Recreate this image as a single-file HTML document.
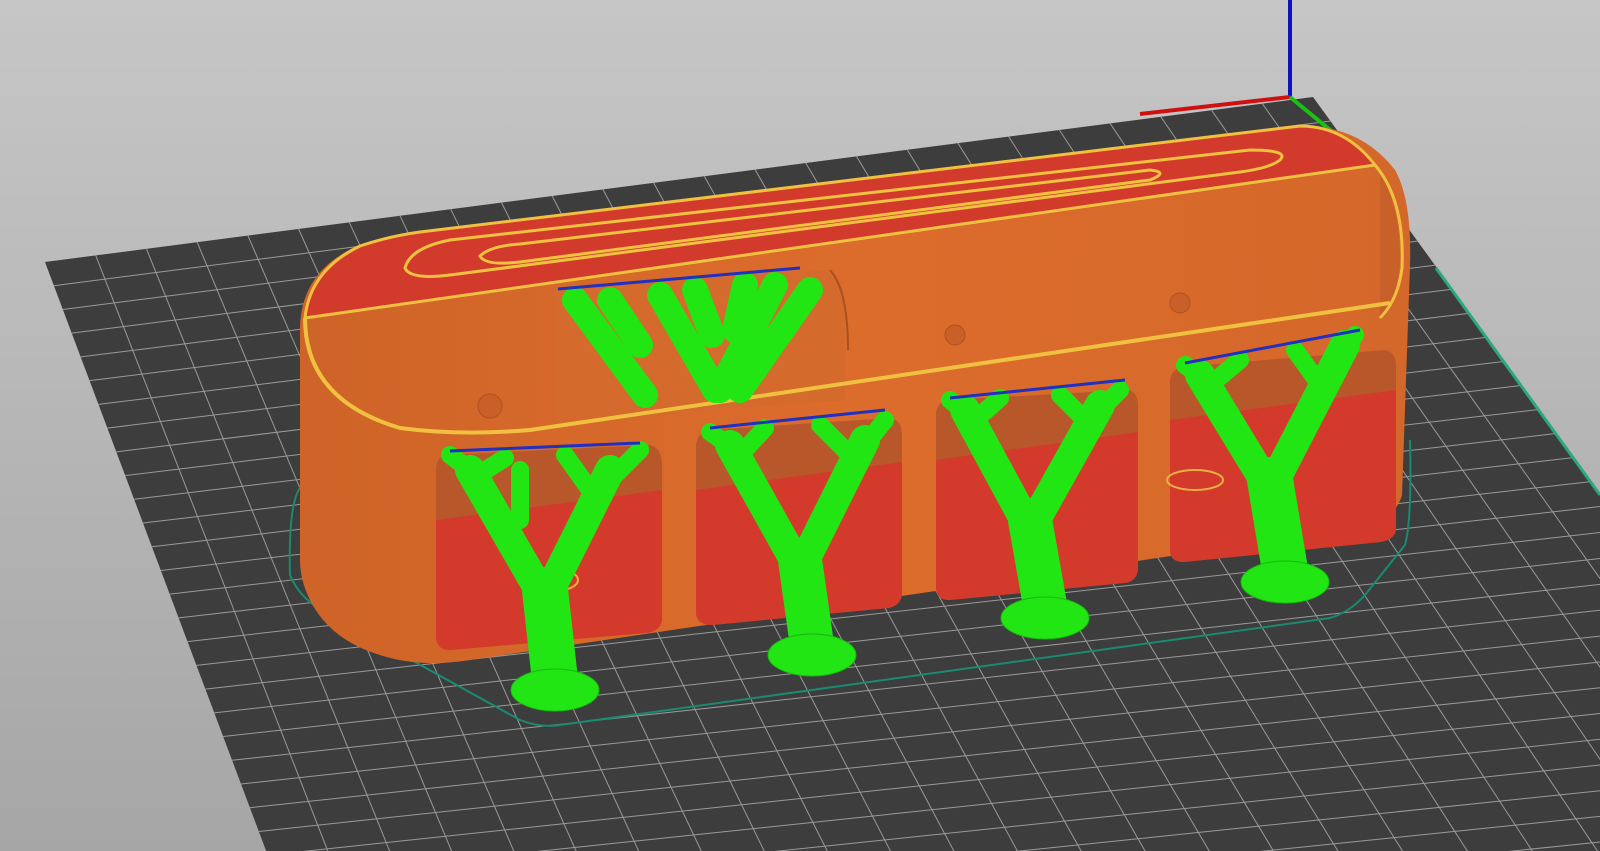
<!DOCTYPE html>
<html><head><meta charset="utf-8">
<style>
html,body{margin:0;padding:0;width:1600px;height:851px;overflow:hidden;background:#b4b4b4;}
svg{display:block;position:absolute;left:0;top:0;overflow:hidden}
</style></head>
<body>
<svg id="s" width="1600" height="851" viewBox="0 0 1600 851" xmlns="http://www.w3.org/2000/svg">
<defs>
<linearGradient id="bg" x1="0" y1="0" x2="0" y2="1">
<stop offset="0" stop-color="#c6c6c6"/><stop offset="1" stop-color="#a6a6a6"/>
</linearGradient>
<linearGradient id="wall" x1="0" y1="0" x2="1" y2="0">
<stop offset="0" stop-color="#cf6428"/><stop offset="0.5" stop-color="#dc6c2c"/><stop offset="1" stop-color="#d4682a"/>
</linearGradient>
<clipPath id="cl"><rect width="1600" height="851"/></clipPath>
</defs>
<g clip-path="url(#cl)">
<rect width="1600" height="851" fill="url(#bg)"/>
<polygon points="45,262 1313,97 1888,890 339,1045" fill="#3d3d3d"/>
<g id="grid" stroke="#9a9a9a" stroke-width="1"></g>
<!-- axes -->
<line x1="1290" y1="0" x2="1290" y2="97" stroke="#1010c0" stroke-width="4"/>
<line x1="1140" y1="114" x2="1290" y2="97" stroke="#d01010" stroke-width="4"/>
<line x1="1290" y1="97" x2="1352" y2="148" stroke="#18c018" stroke-width="4"/>
<line x1="1436" y1="268" x2="1600" y2="495" stroke="#2aa880" stroke-width="3"/>
<!-- brim outline -->
<path d="M302,485 Q288,500 290,575 Q300,600 330,615 L520,720 Q540,728 560,725 L1330,618 Q1350,612 1365,595 L1405,545 Q1412,520 1410,440" fill="none" stroke="#1a8a70" stroke-width="2"/>
<!-- box body -->
<path d="M300,330 Q300,270 360,245 Q390,235 420,232 L1300,126 Q1360,125 1395,170 Q1412,200 1410,265 L1402,495 Q1395,520 1360,528 L470,660 Q420,668 380,655 Q330,640 310,600 Q300,580 300,560 Z" fill="url(#wall)"/>
<!-- red top -->
<path d="M305,318 Q310,270 360,246 Q390,236 420,232 L1300,126 Q1345,126 1375,165 Z" fill="#d23b2c"/>
<path d="M305,318 Q310,270 360,246 Q390,236 420,232 L1300,126 Q1345,126 1375,165 L305,318" fill="none" stroke="#f0c040" stroke-width="3"/>
<path d="M405,268 Q410,248 450,240 L1250,150 Q1290,150 1280,160 Q1270,168 1240,172 L450,275 Q410,280 405,268 Z" fill="none" stroke="#f0c040" stroke-width="3"/>
<path d="M480,256 Q490,246 520,244 L1150,170 Q1170,172 1150,180 L520,262 Q485,266 480,256 Z" fill="none" stroke="#f0c040" stroke-width="3"/>
<!-- right cap interior -->
<path d="M1375,165 Q1400,200 1400,260 Q1398,300 1380,318 L1380,170 Z" fill="#c8602a"/>
<path d="M1375,165 Q1405,200 1402,268 Q1398,300 1380,318" fill="none" stroke="#f0c040" stroke-width="3"/>
<!-- back window -->
<path d="M555,290 L830,270 Q845,280 845,300 L845,400 L555,420 Z" fill="#d46a2c"/>
<path d="M830,270 Q848,290 848,350" fill="none" stroke="#a85020" stroke-width="2"/>
<!-- front rim -->
<path d="M305,318 Q305,400 400,428 Q460,436 530,430 L1390,303" fill="none" stroke="#f0c040" stroke-width="4"/>
<!-- holes -->
<circle cx="490" cy="406" r="12" fill="#c86028" stroke="#b05020"/>
<circle cx="955" cy="335" r="10" fill="#c86028" stroke="#b05020"/>
<circle cx="1180" cy="303" r="10" fill="#c86028" stroke="#b05020"/>
<!-- front windows -->
<g fill="#b8582a">
<path d="M445,455 L650,445 Q662,448 662,465 L662,620 Q660,632 645,633 L450,650 Q436,650 436,636 L436,470 Q436,458 445,455Z"/>
<path d="M708,430 L890,418 Q902,420 902,435 L902,595 Q900,606 888,608 L712,625 Q696,625 696,612 L696,445 Q698,432 708,430Z"/>
<path d="M948,400 L1128,390 Q1138,392 1138,405 L1138,570 Q1136,582 1124,583 L950,600 Q936,600 936,588 L936,412 Q938,402 948,400Z"/>
<path d="M1182,367 L1385,350 Q1396,352 1396,366 L1396,530 Q1394,540 1380,542 L1184,562 Q1170,562 1170,550 L1170,380 Q1172,369 1182,367Z"/>
</g>
<g fill="#d33a2c">
<path d="M436,520 L662,490 L662,620 Q660,632 645,633 L450,650 Q436,650 436,636Z"/>
<path d="M696,490 L902,462 L902,595 Q900,606 888,608 L712,625 Q696,625 696,612Z"/>
<path d="M936,460 L1138,432 L1138,570 Q1136,582 1124,583 L950,600 Q936,600 936,588Z"/>
<path d="M1170,420 L1396,390 L1396,530 Q1394,540 1380,542 L1184,562 Q1170,562 1170,550Z"/>
</g>
<ellipse cx="548" cy="580" rx="30" ry="12" fill="none" stroke="#e8b040" stroke-width="2"/>
<ellipse cx="1195" cy="480" rx="28" ry="10" fill="none" stroke="#e8b040" stroke-width="2"/>
<!-- trees -->
<g fill="none" stroke="#22e614" stroke-linecap="round" stroke-linejoin="round">
<!-- back -->
<g stroke-width="26">
<path d="M575,300 L645,395"/><path d="M610,300 L640,345"/>
<path d="M660,295 L715,390"/><path d="M695,290 L712,335"/>
<path d="M775,285 L720,390"/><path d="M810,290 L740,390"/><path d="M745,285 L735,330"/>
</g>
<!-- tree 1 -->
<path d="M555,680 L545,590" stroke-width="46"/>
<g stroke-width="30"><path d="M545,600 L470,470"/><path d="M545,600 L610,470"/></g>
<g stroke-width="18"><path d="M470,470 L450,455"/><path d="M470,480 L505,458"/><path d="M590,490 L565,455"/><path d="M610,480 L640,450"/><path d="M520,520 L520,470"/></g>
<!-- tree 2 -->
<path d="M812,645 L800,560" stroke-width="44"/>
<g stroke-width="30"><path d="M800,570 L730,445"/><path d="M800,570 L865,440"/></g>
<g stroke-width="18"><path d="M735,450 L710,432"/><path d="M740,455 L765,428"/><path d="M850,455 L820,425"/><path d="M865,445 L885,420"/></g>
<!-- tree 3 -->
<path d="M1045,605 L1030,520" stroke-width="44"/>
<g stroke-width="30"><path d="M1030,530 L965,410"/><path d="M1030,530 L1100,405"/></g>
<g stroke-width="18"><path d="M970,415 L950,400"/><path d="M975,420 L1000,398"/><path d="M1085,420 L1060,395"/><path d="M1100,410 L1120,390"/></g>
<!-- tree 4 -->
<path d="M1285,570 L1270,480" stroke-width="46"/>
<g stroke-width="30"><path d="M1270,490 L1200,375"/><path d="M1270,490 L1345,345"/></g>
<g stroke-width="18"><path d="M1205,380 L1185,365"/><path d="M1210,385 L1240,360"/><path d="M1320,385 L1295,350"/><path d="M1345,350 L1355,335"/></g>
</g>
<g fill="#22e614" stroke="#18b810" stroke-width="1">
<ellipse cx="555" cy="690" rx="44" ry="21"/>
<ellipse cx="812" cy="655" rx="44" ry="21"/>
<ellipse cx="1045" cy="618" rx="44" ry="21"/>
<ellipse cx="1285" cy="582" rx="44" ry="21"/>
</g>
<!-- blue top edges of supports -->
<g stroke="#2030c0" stroke-width="3">
<line x1="558" y1="289" x2="800" y2="268"/>
<line x1="450" y1="451" x2="640" y2="443"/>
<line x1="710" y1="428" x2="885" y2="410"/>
<line x1="950" y1="398" x2="1125" y2="380"/>
<line x1="1185" y1="363" x2="1360" y2="330"/>
</g>
</g>
</svg>
<script>
(function(){
var A=[45,262],B=[1313,97],C=[1888,890],D=[339,1045];
function P(u,v){var x=(1-u)*(1-v)*A[0]+u*(1-v)*B[0]+u*v*C[0]+(1-u)*v*D[0];
var y=(1-u)*(1-v)*A[1]+u*(1-v)*B[1]+u*v*C[1]+(1-u)*v*D[1];return [x,y];}
var g=document.getElementById('grid'),h='';
var NU=25,NV=33;
for(var i=1;i<NU;i++){var a=P(i/NU,0),b=P(i/NU,1);h+='<line x1="'+a[0]+'" y1="'+a[1]+'" x2="'+b[0]+'" y2="'+b[1]+'"/>';}
for(var j=1;j<NV;j++){var a=P(0,j/NV),b=P(1,j/NV);h+='<line x1="'+a[0]+'" y1="'+a[1]+'" x2="'+b[0]+'" y2="'+b[1]+'"/>';}
g.innerHTML=h;
})();
</script>
</body></html>
